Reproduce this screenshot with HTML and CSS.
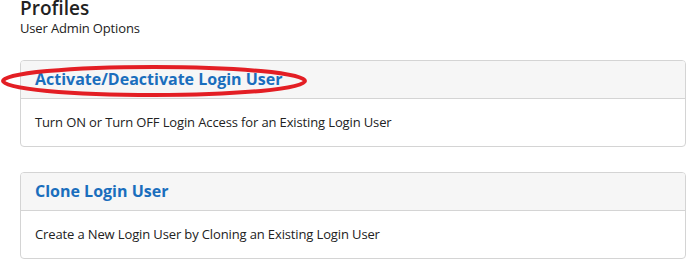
FILE: index.html
```html
<!DOCTYPE html>
<html lang="en">
<head>
  <meta charset="UTF-8">
  <title>Profiles</title>
  <link rel="stylesheet" href="styles.css">
</head>
<body>
  <div class="page">
    <h1 class="page-title">Profiles</h1>
    <div class="page-sub">User Admin Options</div>

    <div class="panel">
      <div class="panel-heading">
        <a class="panel-title" href="#">Activate/Deactivate Login User</a>
      </div>
      <div class="panel-body">Turn ON or Turn OFF Login Access for an Existing Login User</div>
    </div>

    <div class="panel">
      <div class="panel-heading">
        <a class="panel-title" href="#">Clone Login User</a>
      </div>
      <div class="panel-body">Create a New Login User by Cloning an Existing Login User</div>
    </div>
  </div>

  <svg class="mark" width="310" height="36" viewBox="0 0 310 36">
    <ellipse cx="154" cy="18" rx="151" ry="14" fill="none" stroke="#e31e24" stroke-width="4"/>
  </svg>
</body>
</html>
```

FILE: styles.css
```css
body {
  margin: 0;
  background: #fff;
  font-family: 'Open Sans', 'Noto Sans', sans-serif;
  color: #222;
  position: relative;
}

.page {
  padding: 0 12px 0 20px;
}

.page-title {
  margin: -3px 0 0;
  font-size: 19px;
  line-height: 22px;
  font-weight: 600;
  color: #222;
}

.page-sub {
  font-size: 13px;
  line-height: 18px;
  letter-spacing: -0.15px;
  margin-bottom: 23px;
}

.panel {
  border: 1px solid #d4d4d4;
  border-radius: 4px;
  margin-bottom: 25px;
  overflow: hidden;
}

.panel:last-child {
  margin-bottom: 0;
}

.panel-heading {
  background: #f6f6f6;
  border-bottom: 1px solid #d4d4d4;
  padding: 9px 14px 10px;
  line-height: 18px;
}

.panel-title {
  font-size: 16px;
  font-weight: 700;
  color: #1a6ebd;
  text-decoration: none;
}

.panel-body {
  padding: 14px 14px 15px;
  font-size: 13px;
  line-height: 18px;
  letter-spacing: -0.13px;
  color: #222;
}

.mark {
  position: absolute;
  left: 0;
  top: 63px;
}
```
